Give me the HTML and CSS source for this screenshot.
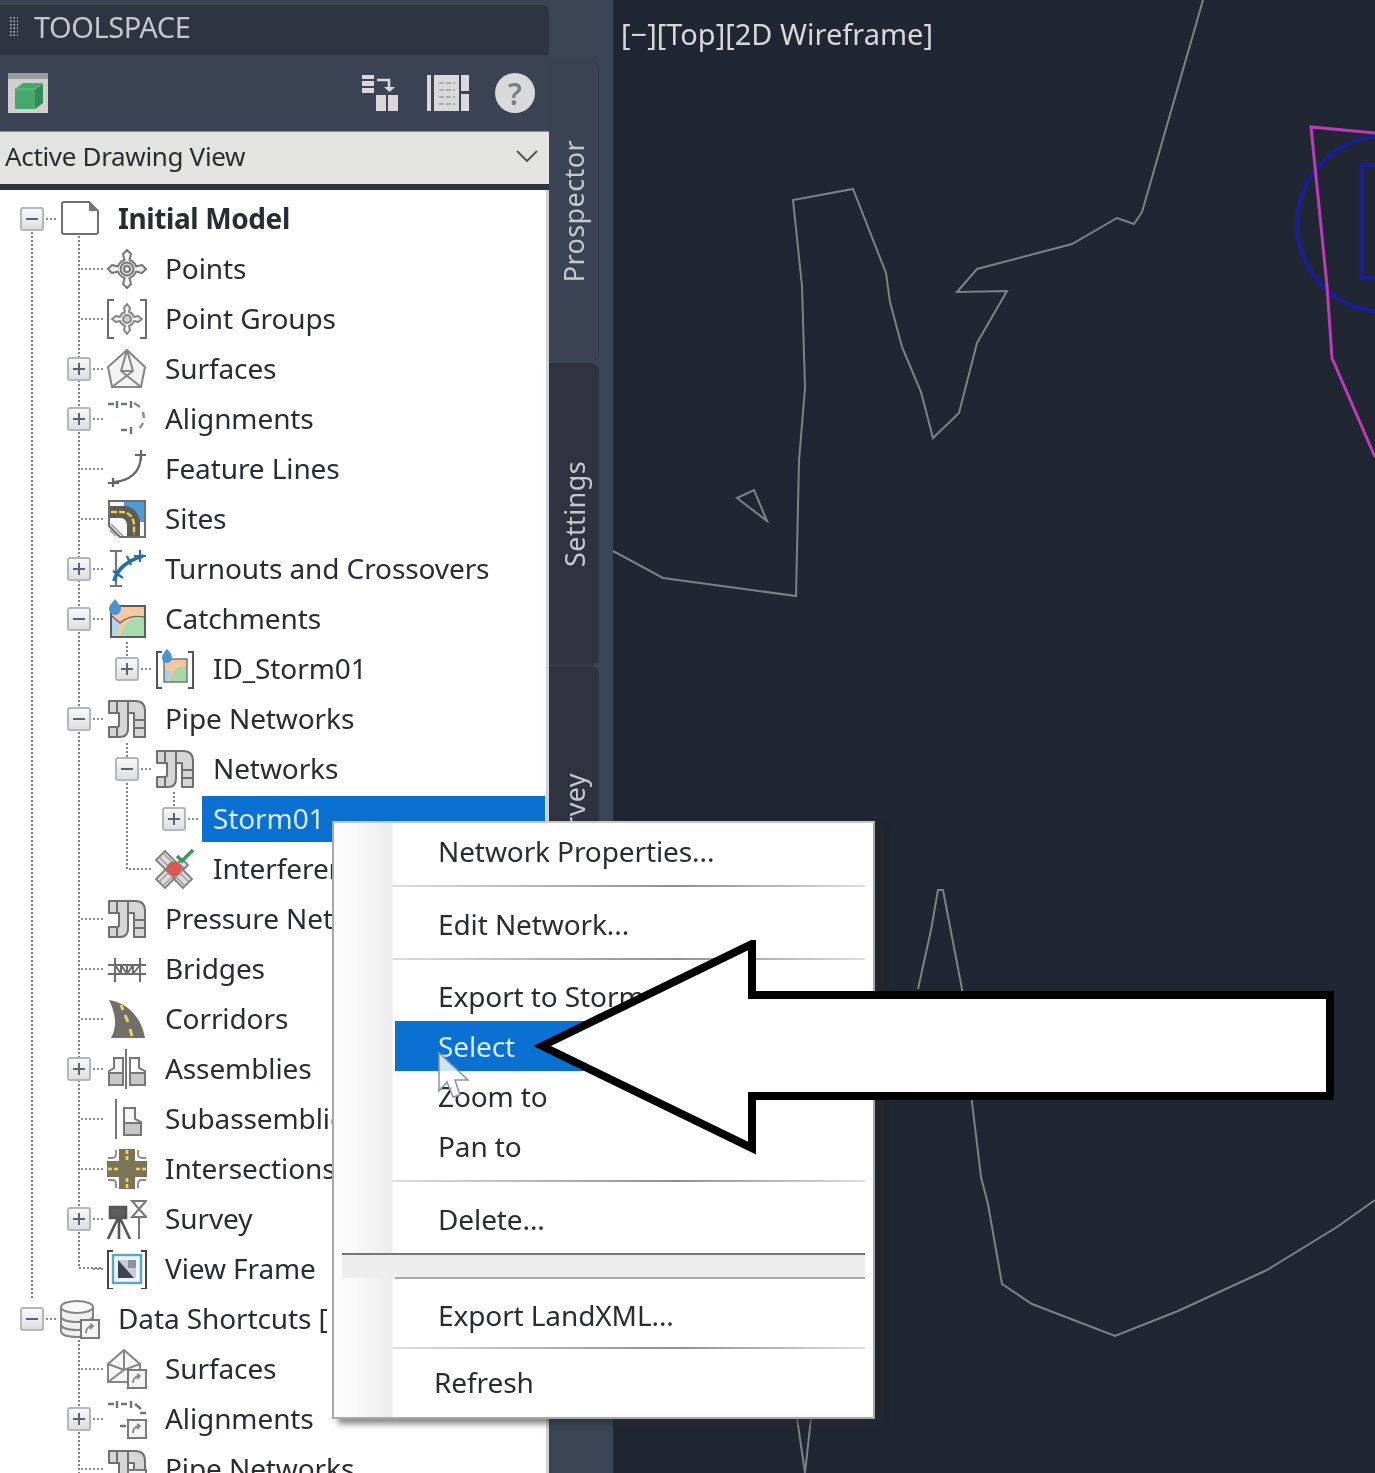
FILE: index.html
```html
<!DOCTYPE html>
<html lang="en">
<head>
<meta charset="utf-8">
<title>Toolspace</title>
<link rel="stylesheet" href="styles.css">
</head>
<body>
<svg class="defs" width="0" height="0" aria-hidden="true">
  <defs>
    <symbol id="i-doc" viewBox="0 0 40 40"><path d="M2 5a2 2 0 0 1 2-2h25l9 9v21a2 2 0 0 1-2 2H4a2 2 0 0 1-2-2z" fill="#fff" stroke="#6f6f6f" stroke-width="2"/><path d="M29 3l9 9h-9z" fill="#777"/></symbol>
    <symbol id="i-pt" viewBox="0 0 40 40"><g fill="#f4f4f4" stroke="#777" stroke-width="2" stroke-linejoin="round"><path d="M20 1l4 4-1.500 6a10 10 0 0 1 6.500 6.500l6-1.500 4 4-4 4-6-1.500a10 10 0 0 1-6.500 6.500l1.500 6-4 4-4-4 1.500-6a10 10 0 0 1-6.500-6.500l-6 1.500-4-4 4-4 6 1.500a10 10 0 0 1 6.500-6.500L16 5z"/><circle cx="20" cy="20" r="6.500" fill="#ddd"/><circle cx="20" cy="20" r="3" fill="#f4f4f4"/></g></symbol>
    <symbol id="i-ptg" viewBox="0 0 40 40"><g fill="#f4f4f4" stroke="#6a6a6a" stroke-width="2" stroke-linejoin="round"><path d="M7 1H1v38h6M33 1h6v38h-6" fill="none"/><path d="M20 5l3 4-1 4a7.500 7.500 0 0 1 5 5l4-1 4 3-4 3-4-1a7.500 7.500 0 0 1-5 5l1 4-3 4-3-4 1-4a7.500 7.500 0 0 1-5-5l-4 1-4-3 4-3 4 1a7.500 7.500 0 0 1 5-5l-1-4z" stroke="#858585"/><circle cx="20" cy="20" r="4" fill="#ccc" stroke="#858585"/></g></symbol>
    <symbol id="i-surf" viewBox="0 0 40 40"><g fill="#f3f3f3" stroke="#858585" stroke-width="2" stroke-linejoin="round"><path d="M20 1l18 17-4 20H5L1 18z"/><path d="M20 1l-6 21 20 16M20 1l6 21L5 38M14 22h12" fill="none"/></g></symbol>
    <symbol id="i-align" viewBox="0 0 40 40"><g fill="none" stroke="#6d7480" stroke-width="2.400"><path d="M1 5h6M10 2v7M14 5h6M24 2v7"/><path d="M27 4l6 4M36 13l1 6M36 24l-3 5" stroke="#7a8fa8"/><path d="M14 31h6M24 28v7"/></g></symbol>
    <symbol id="i-feat" viewBox="0 0 40 40"><g fill="none" stroke="#666" stroke-width="2.200"><path d="M6 33C22 32 34 24 34 6"/><path d="M1 34h11M6 29v9M28 6h11M34 1v11"/></g></symbol>
    <symbol id="i-site" viewBox="0 0 40 40"><path d="M2 2h36v36H13L2 27z" fill="#f8f8f8" stroke="#6e6e6e" stroke-width="2"/><path d="M17 3h20v20h-5C30 13 25 8 17 7z" fill="#4f9bd9"/><path d="M3 7h14c9 0 16 8 16 17v13H20V26c0-4-3-7-6-7H3z" fill="#5f5c50"/><path d="M4 13h11c8 0 12 7 12 13v10" fill="none" stroke="#e9cf5a" stroke-width="2.400" stroke-dasharray="6 2"/><path d="M4 25l12 12M3 31l6 6" stroke="#999" stroke-width="1.600"/></symbol>
    <symbol id="i-turn" viewBox="0 0 40 40"><g fill="none" stroke-width="2.200"><path d="M3 2h12M9 2v35M3 37h12" stroke="#777"/><path d="M7 32c3-11 12-20 29-25" stroke="#1f6fa8" stroke-width="3.800"/><path d="M33 1v12M27 7h12M20 7l4 9M6 22l10 7" stroke="#1f6fa8"/></g></symbol>
    <symbol id="i-catch" viewBox="0 0 40 40"><rect x="4" y="7" width="34" height="31" fill="#a8dcae" stroke="#5c5c5c" stroke-width="2"/><path d="M5 8h32v11C26 16 17 22 13 37H5z" fill="#f8c8a4"/><path d="M5 18l8 6c-2 4-3 8-4 13H5z" fill="#b2d4f0"/><path d="M8 0c3 4 6 7 6 10a6 6 0 0 1-12 0c0-3 3-6 6-10z" fill="#4a94cf"/><path d="M5 17l8 7C18 19 27 16 37 18" fill="none" stroke="#666" stroke-width="1.400"/></symbol>
    <symbol id="i-idcatch" viewBox="0 0 40 40"><path d="M7 3H2v36h5M33 3h5v36h-5" fill="none" stroke="#555" stroke-width="2"/><rect x="9" y="10" width="23" height="23" fill="#a8d8a8" stroke="#777" stroke-width="1.500"/><path d="M10 11h21v7c-8-2-14 3-16 14h-5z" fill="#f6c6a0"/><path d="M10 20l6 3-3 9h-3z" fill="#a8cdec"/><path d="M12 0c3 3 5 6 5 9a5 5 0 0 1-10 0c0-3 2-6 5-9z" fill="#4a94cf"/></symbol>
    <symbol id="i-pipe" viewBox="0 0 40 40"><g fill="#d6d6d6" stroke="#6f6f6f" stroke-width="2" stroke-linejoin="round"><path d="M2 2h26q10 0 10 10v26H27V14H21v16q0 8-8 8H2V28h8q2 0 2-2V14H2z"/><path d="M10 2v12M21 2v12M27 21h11M27 29h11M10 28v10" fill="none"/></g></symbol>
    <symbol id="i-interf" viewBox="0 0 40 40"><g fill="#dcdcdc" stroke="#808080" stroke-width="1.800"><path d="M1 11l9-9 11 11-9 9zM1 30l9 9 11-11-9-9zM37 30l-9 9-10-10 9-9zM23 14l4-4 6 6-4 4z"/></g><path d="M4 8l11 11M8 4l11 11M4 33l11-11M8 37l11-11M34 33L23 22M30 37L19 26" stroke="#9a9a9a" stroke-width="1.400"/><circle cx="19" cy="20" r="7.500" fill="#d85a55"/><path d="M22 7l5 5 11-11" fill="none" stroke="#3d9a5a" stroke-width="3.600"/></symbol>
    <symbol id="i-bridge" viewBox="0 0 40 40"><g fill="none" stroke="#6d6d6d" stroke-width="2"><path d="M1 16h38M1 25h38M8 9v24M33 9v24M14 16v9M20 16v9M26 16v9M8 16l6 9M14 16l6 9M20 25l6-9M26 25l7-9"/></g></symbol>
    <symbol id="i-corr" viewBox="0 0 40 40"><path d="M2 1c18 3 32 16 36 38H4C11 26 8 13 2 1z" fill="#716f67"/><path d="M14 6l2 5M18 16l3 7M23 30l2 7" stroke="#ead36a" stroke-width="3"/></symbol>
    <symbol id="i-asm" viewBox="0 0 40 40"><g stroke="#777" stroke-width="2"><path d="M19 0v40" fill="none"/><path d="M2 36V22l5-3V9h9v27z" fill="#f3f3f3"/><path d="M2 36V24h14v12zM23 36V24h15v12z" fill="#c9c9c9"/><path d="M23 9h9v10l6 3v2H23z" fill="none"/></g></symbol>
    <symbol id="i-sub" viewBox="0 0 40 40"><g stroke="#777" stroke-width="2"><path d="M9 0v40" fill="none"/><path d="M17 9h11v11l6 3v13H17z" fill="#f6f6f6"/><path d="M17 24h17v12H17z" fill="#c6c6c6"/></g></symbol>
    <symbol id="i-inter" viewBox="0 0 40 40"><path d="M12 0h16v12h12v16H28v12H12V28H0V12h12z" fill="#7c7456"/><path d="M20 1v10M20 29v10M1 20h10M29 20h10" stroke="#ecd56b" stroke-width="2.600" stroke-dasharray="4 2"/><path d="M9 1v4q0 4-4 4H1M31 1v4q0 4 4 4h4M9 39v-4q0-4-4-4H1M31 39v-4q0-4 4-4h4" fill="none" stroke="#8a8a8a" stroke-width="1.800"/></symbol>
    <symbol id="i-survey" viewBox="0 0 40 40"><g fill="none" stroke="#555" stroke-width="2.600"><path d="M3 8h16v11H3z" fill="#5d5d5d"/><path d="M11 19L1 40M12 19v21M13 19l10 21"/><path d="M25 2h14L25 18h14zM32 18v22" stroke="#777" stroke-width="2"/></g></symbol>
    <symbol id="i-vf" viewBox="0 0 40 40"><path d="M6 2H1v38h5M34 2h5v38h-5" fill="none" stroke="#444" stroke-width="2"/><rect x="6" y="6" width="28" height="28" fill="#eef6fa" stroke="#5aa8c8" stroke-width="2.400"/><path d="M11 11h18v18H11z" fill="#c9ccd2"/><path d="M11 11l16 18H11z" fill="#3c4350"/><path d="M21 11h8v8h-8z" fill="#8b93a0"/></symbol>
    <symbol id="i-badge" viewBox="0 0 20 20"><rect x="1" y="1" width="18" height="18" fill="#f4f4f4" stroke="#7a7a7a" stroke-width="2"/><path d="M6 14c0-5 3-7 7-7M10 5l3 2-3 3" fill="none" stroke="#888" stroke-width="1.800"/></symbol>
    <symbol id="i-db" viewBox="0 0 40 40"><g fill="#efefef" stroke="#858585" stroke-width="2"><path d="M1 8v24c0 4 7 6 16 6s16-2 16-6V8"/><ellipse cx="17" cy="8" rx="16" ry="6" fill="#fafafa"/><path d="M1 17c0 4 7 6 16 6s16-2 16-6M1 25c0 4 7 6 16 6s16-2 16-6" fill="none"/></g><use href="#i-badge" x="20" y="20" width="20" height="20"/></symbol>
    <symbol id="i-ssurf" viewBox="0 0 40 40"><g fill="#f6f6f6" stroke="#858585" stroke-width="2"><path d="M17 1l16 14v18H1V15z"/><path d="M17 1v20M1 15l16 6 16-6M1 33l16-12" fill="none"/></g><use href="#i-badge" x="20" y="20" width="20" height="20"/></symbol>
    <symbol id="i-salign" viewBox="0 0 40 40"><g fill="none" stroke="#6d7480" stroke-width="2.400"><path d="M1 5h6M10 2v7M14 5h6M24 2v7M28 5l6 5M33 14h6M13 27h6"/></g><use href="#i-badge" x="20" y="20" width="20" height="20"/></symbol>
    <symbol id="i-spipe" viewBox="0 0 40 40"><use href="#i-pipe" width="40" height="40"/><use href="#i-badge" x="20" y="20" width="20" height="20"/></symbol>
  </defs>
</svg>

<div class="app">
  <aside class="dock">
    <section class="panel">
      <header class="titlebar"><span class="grip"></span><span class="title">TOOLSPACE</span></header>
      <div class="toolbar">
        <svg class="tb-drawing" viewBox="0 0 40 40"><rect width="40" height="40" fill="#cfcfcf"/><rect width="40" height="6" fill="#9a9a9a"/><path d="M7 16l8-6h20v20l-8 6H7z" fill="#46a86a"/><path d="M27 16v20l8-6V10z" fill="#358a55"/><path d="M7 16h20l8-6" fill="none" stroke="#62c98a" stroke-width="1"/></svg>
        <span class="tb-spacer"></span>
        <svg class="tb-icon tb-tree" viewBox="0 0 36 36"><g fill="#d9d9d9"><rect x="0" y="0" width="12" height="4"/><rect x="0" y="6" width="12" height="5"/><rect x="0" y="13" width="12" height="5"/><rect x="14" y="20" width="10" height="16"/><rect x="26" y="20" width="10" height="16"/></g><path d="M15 5h12v9" fill="none" stroke="#d9d9d9" stroke-width="2.500"/><path d="M22 12h11l-5.500 5z" fill="#d9d9d9"/></svg>
        <svg class="tb-icon tb-sheet" viewBox="0 0 42 38"><g fill="#d9d9d9"><rect x="0" y="1" width="4" height="36"/><rect x="7" y="1" width="25" height="36"/><rect x="34" y="1" width="8" height="16"/><rect x="34" y="20" width="8" height="17"/></g><path d="M12 9h16M12 16h16M12 23h16M12 30h16" stroke="#aaa" stroke-width="2" stroke-dasharray="5 2"/></svg>
        <span class="tb-help">?</span>
      </div>
      <div class="viewselect"><span class="viewlabel">Active Drawing View</span><svg class="chev" viewBox="0 0 22 12"><path d="M1 1l10 10L21 1" fill="none" stroke="#555" stroke-width="2"/></svg></div>
      <div class="tree">
        <svg class="guides" width="549" height="1283" viewBox="0 190 549 1283"><g fill="none" stroke="#80848a" stroke-width="2" stroke-dasharray="2 2"><path d="M32 232V1300"/><path d="M79 236V1268H103"/><path d="M79 1340V1473"/><path d="M127 642V656"/><path d="M127 743V869H150"/><path d="M174 792V806"/></g></svg>
        <div class="rows">
          <div class="row l0"><span class="slot"><span class="box minus"></span></span><svg class="ico"><use href="#i-doc"/></svg><span class="label strong">Initial Model</span></div>
          <div class="row l1"><span class="slot elbow"></span><svg class="ico"><use href="#i-pt"/></svg><span class="label">Points</span></div>
          <div class="row l1"><span class="slot elbow"></span><svg class="ico"><use href="#i-ptg"/></svg><span class="label">Point Groups</span></div>
          <div class="row l1"><span class="slot"><span class="box plus"></span></span><svg class="ico"><use href="#i-surf"/></svg><span class="label">Surfaces</span></div>
          <div class="row l1"><span class="slot"><span class="box plus"></span></span><svg class="ico"><use href="#i-align"/></svg><span class="label">Alignments</span></div>
          <div class="row l1"><span class="slot elbow"></span><svg class="ico"><use href="#i-feat"/></svg><span class="label">Feature Lines</span></div>
          <div class="row l1"><span class="slot elbow"></span><svg class="ico"><use href="#i-site"/></svg><span class="label">Sites</span></div>
          <div class="row l1"><span class="slot"><span class="box plus"></span></span><svg class="ico"><use href="#i-turn"/></svg><span class="label">Turnouts and Crossovers</span></div>
          <div class="row l1"><span class="slot"><span class="box minus"></span></span><svg class="ico"><use href="#i-catch"/></svg><span class="label">Catchments</span></div>
          <div class="row l2"><span class="slot"><span class="box plus"></span></span><svg class="ico"><use href="#i-idcatch"/></svg><span class="label">ID_Storm01</span></div>
          <div class="row l1"><span class="slot"><span class="box minus"></span></span><svg class="ico"><use href="#i-pipe"/></svg><span class="label">Pipe Networks</span></div>
          <div class="row l2"><span class="slot"><span class="box minus"></span></span><svg class="ico"><use href="#i-pipe"/></svg><span class="label">Networks</span></div>
          <div class="row l3"><span class="slot"><span class="box plus"></span></span><span class="label selected">Storm01</span></div>
          <div class="row l2"><span class="slot"></span><svg class="ico"><use href="#i-interf"/></svg><span class="label">Interference Checks</span></div>
          <div class="row l1"><span class="slot elbow"></span><svg class="ico"><use href="#i-pipe"/></svg><span class="label">Pressure Networks</span></div>
          <div class="row l1"><span class="slot elbow"></span><svg class="ico"><use href="#i-bridge"/></svg><span class="label">Bridges</span></div>
          <div class="row l1"><span class="slot elbow"></span><svg class="ico"><use href="#i-corr"/></svg><span class="label">Corridors</span></div>
          <div class="row l1"><span class="slot"><span class="box plus"></span></span><svg class="ico"><use href="#i-asm"/></svg><span class="label">Assemblies</span></div>
          <div class="row l1"><span class="slot elbow"></span><svg class="ico"><use href="#i-sub"/></svg><span class="label">Subassemblies</span></div>
          <div class="row l1"><span class="slot elbow"></span><svg class="ico"><use href="#i-inter"/></svg><span class="label">Intersections</span></div>
          <div class="row l1"><span class="slot"><span class="box plus"></span></span><svg class="ico"><use href="#i-survey"/></svg><span class="label">Survey</span></div>
          <div class="row l1"><span class="slot"></span><svg class="ico"><use href="#i-vf"/></svg><span class="label">View Frame</span></div>
          <div class="row l0"><span class="slot"><span class="box minus"></span></span><svg class="ico"><use href="#i-db"/></svg><span class="label">Data Shortcuts [</span></div>
          <div class="row l1"><span class="slot elbow"></span><svg class="ico"><use href="#i-ssurf"/></svg><span class="label">Surfaces</span></div>
          <div class="row l1"><span class="slot"><span class="box plus"></span></span><svg class="ico"><use href="#i-salign"/></svg><span class="label">Alignments</span></div>
          <div class="row l1"><span class="slot elbow"></span><svg class="ico"><use href="#i-spipe"/></svg><span class="label">Pipe Networks</span></div>
        </div>
      </div>
    </section>
    <nav class="tabs">
      <div class="tab active"><span class="tabtext">Prospector</span></div>
      <div class="tab"><span class="tabtext">Settings</span></div>
      <div class="tab"><span class="tabtext">Survey</span></div>
    </nav>
  </aside>

  <main class="viewport">
    <svg class="drawing" viewBox="613 0 762 1473" width="762" height="1473">
      <g fill="none" stroke="#7d8288" stroke-width="2">
        <polyline points="1203,0 1142,212 1134,224 1117,218 1072,244 977,269 957,292 1007,291 977,343 959,413 933,438 921,392 902,347 890,302 886,273 853,189 793,200 802,286 805,388 799,461 796,596 663,578 613,551"/>
        <polygon points="737,498 754,490 767,521"/>
        <polyline points="918,989 931,930 938,890 943,890 962,989 972,1102 981,1177 988,1204 1002,1284 1032,1304 1115,1336 1178,1311 1267,1270 1337,1227 1375,1200"/>
        <polyline points="797,1418 805,1473 811,1418"/>
      </g>
      <g fill="none" stroke="#1c1f8e" stroke-width="4.500">
        <circle cx="1385" cy="224" r="88"/>
        <polyline points="1375,165 1362,165 1362,278 1375,278"/>
      </g>
      <polyline fill="none" stroke="#bd3cba" stroke-width="3" points="1375,133 1311,127 1327,286 1332,358 1375,457"/>
    </svg>
    <span class="viewlabel-top">[−][Top][2D Wireframe]</span>
  </main>

  <div class="menu">
    <div class="menu-item">Network Properties...</div>
    <div class="menu-sep"></div>
    <div class="menu-item">Edit Network...</div>
    <div class="menu-sep"></div>
    <div class="menu-item">Export to Storm</div>
    <div class="menu-item hot">Select</div>
    <div class="menu-item">Zoom to</div>
    <div class="menu-item">Pan to</div>
    <div class="menu-sep"></div>
    <div class="menu-item">Delete...</div>
    <div class="menu-band"></div>
    <div class="menu-item">Export LandXML...</div>
    <div class="menu-sep short"></div>
    <div class="menu-item refresh">Refresh</div>
  </div>

  <svg class="cursor" viewBox="0 0 32 46" width="32" height="46"><path d="M1 1l29 27H17l5 15-7 2-6-15-8 9z" fill="#fff" fill-opacity=".82" stroke="#8b94a3" stroke-width="1.500"/></svg>

  <svg class="callout" viewBox="0 0 804 216" width="804" height="216"><path d="M8 106L218 4V55H796V156H218V208z" fill="#fff" stroke="#000" stroke-width="8"/></svg>
</div>
</body>
</html>
```

FILE: styles.css
```css
* { box-sizing: border-box; }

html, body {
  margin: 0;
  padding: 0;
  width: 1375px;
  height: 1473px;
  overflow: hidden;
  background: #212732;
}

.defs { position: absolute; }

.app {
  position: relative;
  display: flex;
  width: 1375px;
  height: 1473px;
  overflow: hidden;
  font-family: "Noto Sans", "Open Sans", sans-serif;
  filter: blur(0.6px);
}

.dock {
  display: flex;
  flex: 0 0 613px;
  background: #3c4556;
}

.panel {
  display: flex;
  flex-direction: column;
  flex: 0 0 549px;
  padding-top: 5px;
}

.titlebar {
  display: flex;
  align-items: center;
  flex: 0 0 50px;
  padding: 0 0 8px 9px;
  background: #2f3441;
  border-top-right-radius: 6px;
}

.grip {
  width: 9px;
  height: 20px;
  margin-right: 16px;
  background-image: radial-gradient(circle, #aab0b8 1.100px, transparent 1.300px);
  background-size: 3.500px 3.500px;
}

.title {
  font-size: 29px;
  letter-spacing: -0.45px;
  color: #c4c8ce;
}

.toolbar {
  display: flex;
  align-items: center;
  flex: 0 0 76px;
  padding: 0 14px 0 8px;
  background: #3b4354;
  border-top-right-radius: 6px;
}

.tb-drawing { width: 40px; height: 40px; }
.tb-spacer { flex: 1; }
.tb-icon { display: block; }
.tb-tree { width: 36px; height: 36px; margin-right: 29px; }
.tb-sheet { width: 42px; height: 38px; margin-right: 26px; }

.tb-help {
  display: flex;
  align-items: center;
  justify-content: center;
  width: 40px;
  height: 40px;
  border-radius: 50%;
  background: #d9d9d9;
  color: #7a7d82;
  font-size: 30px;
  font-weight: 600;
}

.viewselect {
  display: flex;
  align-items: center;
  justify-content: space-between;
  flex: 0 0 59px;
  padding: 0 11px 4px 5px;
  background: #e3e3e0;
  border-bottom: 6px solid #2f3441;
  border-top: 1px solid #8b8e90;
}

.viewlabel {
  font-size: 26px;
  letter-spacing: -0.33px;
  color: #2a2c33;
}

.chev { width: 22px; height: 12px; }

.tree {
  position: relative;
  flex: 1;
  min-height: 0;
  overflow: hidden;
  background: #fff;
  border-right: 3px solid #d0d2d6;
}

.guides {
  position: absolute;
  top: 0;
  left: 0;
}

.rows {
  position: relative;
  padding-top: 4px;
}

.row {
  display: flex;
  align-items: center;
  height: 50px;
  white-space: nowrap;
}

.l0 { padding-left: 20px; }
.l1 { padding-left: 67px; }
.l2 { padding-left: 115px; }
.l3 { padding-left: 162px; }

.slot {
  position: relative;
  display: flex;
  align-items: center;
  flex: 0 0 40px;
  height: 24px;
}

.slot::after {
  content: "";
  position: absolute;
  left: 26px;
  width: 10px;
  border-top: 2px dotted #8a8d92;
}

.elbow::after { left: 14px; width: 22px; }

.box {
  position: relative;
  display: block;
  width: 24px;
  height: 24px;
  border: 2px solid #b4b6bc;
  border-radius: 3px;
  background: linear-gradient(#f8f8fa, #dfdfe3);
}

.box::before {
  content: "";
  position: absolute;
  left: 4px;
  top: 9px;
  width: 12px;
  height: 2px;
  background: #5f6274;
}

.plus::after {
  content: "";
  position: absolute;
  left: 9px;
  top: 4px;
  width: 2px;
  height: 12px;
  background: #5f6274;
}

.ico {
  flex: 0 0 40px;
  width: 40px;
  height: 40px;
  margin-right: 18px;
}

.label {
  margin-top: -2px;
  font-size: 28px;
  letter-spacing: -0.1px;
  color: #2a2b33;
}

.strong { font-weight: 700; letter-spacing: -0.4px; }

.selected {
  flex: 1;
  align-self: stretch;
  display: flex;
  align-items: center;
  height: 46px;
  margin: 2px 1px 2px 0;
  padding: 0 0 2px 11px;
  background: #0a70d2;
  color: #d6ecff;
}

.tabs {
  display: flex;
  flex-direction: column;
  flex: 0 0 50px;
  padding-top: 60px;
  overflow: hidden;
}

.tab {
  display: flex;
  align-items: center;
  justify-content: center;
  flex: 0 0 303px;
  background: #2f3340;
  border-top-right-radius: 8px;
  border-bottom-right-radius: 8px;
  border-bottom: 1px solid #3c4556;
}

.tab.active {
  background: #3a4254;
  border-right: 1px solid #303644;
}

.tabtext {
  writing-mode: vertical-rl;
  transform: rotate(180deg);
  font-size: 27px;
  letter-spacing: 0.4px;
  color: #c4c8cf;
}

.viewport {
  position: relative;
  flex: 1;
  background: #212732;
}

.drawing {
  position: absolute;
  top: 0;
  left: 0;
}

.viewlabel-top {
  position: absolute;
  top: 14px;
  left: 8px;
  font-size: 29px;
  color: #d6d8dc;
  white-space: nowrap;
}

.menu {
  position: absolute;
  top: 821px;
  left: 332px;
  width: 543px;
  height: 598px;
  padding: 3px 8px 0 61px;
  border: 2px solid #a6a8ac;
  border-top-color: #c4c8cc;
  background: linear-gradient(90deg, #fdfdfd 0, #f8f8f8 25px, #ececec 58px, #fff 59px);
  box-shadow: 6px 5px 6px rgba(40, 40, 40, 0.55);
}

.menu-item {
  height: 50px;
  padding-left: 43px;
  font-size: 28px;
  line-height: 50px;
  letter-spacing: -0.1px;
  color: #2a2b33;
  white-space: nowrap;
  overflow: hidden;
}

.menu-item.hot {
  background: #0a70d2;
  color: #d6ecff;
}

.menu-item.refresh { padding-left: 39px; }

.menu-sep {
  height: 22.500px;
  margin-left: -3px;
  background: linear-gradient(90deg, #dedede, #8e8e8e 60%, #dedede) no-repeat 0 9px / 100% 2px;
}

.menu-sep.short { height: 17px; background-position: 0 7px; }

.menu-band {
  position: relative;
  height: 37px;
  margin: 9px 0 0 -53px;
  background: linear-gradient(#777 0, #777 2px, #ededed 2px, #ededed 25px, transparent 25px);
}

.menu-band::after {
  content: "";
  position: absolute;
  top: 24px;
  left: 53px;
  right: 0;
  height: 2px;
  background: #a8a8a8;
}

.cursor {
  position: absolute;
  top: 1052px;
  left: 438px;
}

.callout {
  position: absolute;
  top: 940px;
  left: 534px;
}
```
